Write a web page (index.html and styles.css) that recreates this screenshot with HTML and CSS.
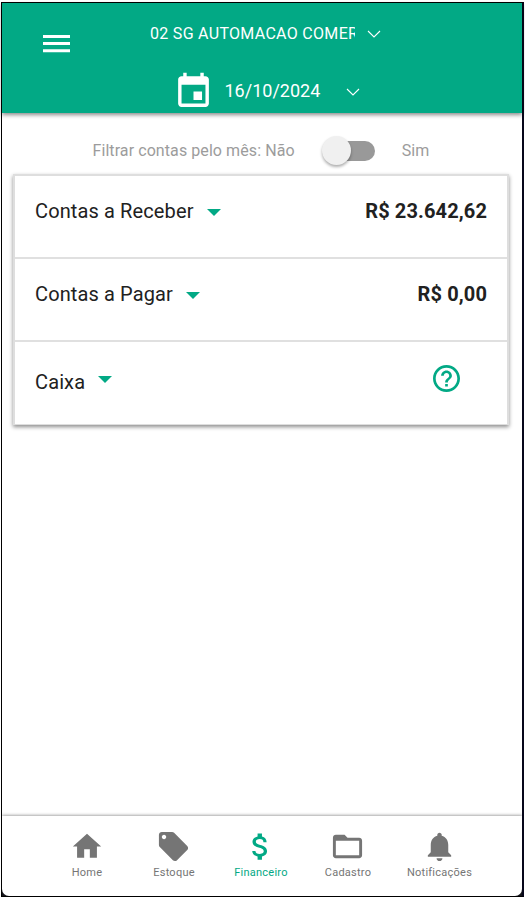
FILE: index.html
```html
<!DOCTYPE html>
<html lang="pt-BR">
<head>
<meta charset="utf-8">
<title>Financeiro</title>
<link rel="stylesheet" href="styles.css">
</head>
<body>
<div class="phone">
  <header class="header">
    <svg class="menu" viewBox="0 0 27 18"><path d="M0 0h27v3H0zM0 7.1h27v3H0zM0 14.2h27v3H0z"/></svg>
    <div class="pickers">
      <div class="company"><span class="company-name">02 SG AUTOMACAO COMER</span><svg class="chevron" viewBox="0 0 14 8"><path d="M1 1l6 6 6-6"/></svg></div>
      <div class="date"><svg class="calendar" viewBox="0 0 24 24"><path d="M17 12h-5v5h5v-5zM16 1v2H8V1H6v2H5c-1.11 0-1.99.9-1.99 2L3 19c0 1.1.89 2 2 2h14c1.1 0 2-.9 2-2V5c0-1.1-.9-2-2-2h-1V1h-2zm3 18H5V8h14v11z"/></svg><span class="date-text">16/10/2024</span><svg class="chevron" viewBox="0 0 14 8"><path d="M1 1l6 6 6-6"/></svg></div>
    </div>
  </header>
  <main class="content">
    <div class="filter"><span class="filter-label">Filtrar contas pelo mês: Não</span><span class="toggle"><span class="knob"></span></span><span class="filter-label">Sim</span></div>
    <section class="card">
      <div class="row"><span class="name">Contas a Receber</span><i class="caret"></i><b class="value">R$ 23.642,62</b></div>
      <div class="row"><span class="name">Contas a Pagar</span><i class="caret"></i><b class="value">R$ 0,00</b></div>
      <div class="row row-cash"><span class="name">Caixa</span><i class="caret"></i><svg class="help" viewBox="2 2 20 20"><path d="M11 18h2v-2h-2v2zm1-16C6.48 2 2 6.48 2 12s4.48 10 10 10 10-4.48 10-10S17.52 2 12 2zm0 18c-4.41 0-8-3.59-8-8s3.59-8 8-8 8 3.59 8 8-3.59 8-8 8zm0-14c-2.21 0-4 1.79-4 4h2c0-1.1.9-2 2-2s2 .9 2 2c0 2-3 1.75-3 5h2c0-2.25 3-2.5 3-5 0-2.21-1.79-4-4-4z"/></svg></div>
    </section>
  </main>
  <nav class="tabs">
    <a class="tab"><svg class="home-icon" viewBox="0 0 24 24"><path d="M10 20v-6h4v6h5v-8h3L12 3 2 12h3v8z"/></svg><span>Home</span></a>
    <a class="tab"><svg viewBox="0 0 24 24"><path d="M21.41 11.58l-9-9C12.05 2.22 11.55 2 11 2H4c-1.1 0-2 .9-2 2v7c0 .55.22 1.05.59 1.42l9 9c.36.36.86.58 1.41.58.55 0 1.05-.22 1.41-.59l7-7c.37-.36.59-.86.59-1.41 0-.55-.23-1.06-.59-1.42zM5.5 7C4.67 7 4 6.33 4 5.5S4.67 4 5.5 4 7 4.67 7 5.5 6.33 7 5.5 7z"/></svg><span>Estoque</span></a>
    <a class="tab active"><svg viewBox="0 0 24 24"><path d="M11.8 10.9c-2.27-.59-3-1.2-3-2.15 0-1.09 1.01-1.85 2.7-1.85 1.78 0 2.44.85 2.5 2.1h2.21c-.07-1.72-1.12-3.3-3.21-3.81V3h-3v2.16c-1.94.42-3.5 1.68-3.5 3.61 0 2.31 1.91 3.46 4.7 4.13 2.5.6 3 1.48 3 2.41 0 .69-.49 1.79-2.7 1.79-2.06 0-2.87-.92-2.98-2.1h-2.2c.12 2.19 1.76 3.42 3.68 3.83V21h3v-2.15c1.95-.37 3.5-1.5 3.5-3.55 0-2.84-2.43-3.81-4.7-4.4z"/></svg><span>Financeiro</span></a>
    <a class="tab"><svg viewBox="0 0 24 24"><path d="M20 6h-8l-2-2H4c-1.1 0-1.99.9-1.99 2L2 18c0 1.1.9 2 2 2h16c1.1 0 2-.9 2-2V8c0-1.1-.9-2-2-2zm0 12H4V8h16v10z"/></svg><span>Cadastro</span></a>
    <a class="tab tab-wide"><svg viewBox="0 0 24 24"><path d="M12 22c1.1 0 2-.9 2-2h-4c0 1.1.89 2 2 2zm6-6v-5c0-3.07-1.64-5.64-4.5-6.32V4c0-.83-.67-1.5-1.5-1.5s-1.5.67-1.5 1.5v.68C7.63 5.36 6 7.92 6 11v5l-2 2v1h16v-1l-2-2z"/></svg><span>Notificações</span></a>
  </nav>
</div>
</body>
</html>
```
FILE: styles.css
```css
* { box-sizing: border-box; }
body {
  margin: 0;
  padding: 2px 1px 1px;
  height: 898px;
  background: #fff;
  font-family: Roboto, sans-serif;
  overflow: hidden;
}
.phone {
  width: 523px;
  height: 895px;
  display: flex;
  flex-direction: column;
  border: 1px solid #000;
  border-right: 2px solid #06061a;
  background: linear-gradient(#fff, #fff 800px, #15151c 800px);
}
svg { display: block; flex: none; fill: currentColor; }
.header {
  height: 110px;
  flex: none;
  display: flex;
  background: #02a985;
  color: #fff;
  box-shadow: 0 2px 4px rgba(0, 0, 0, .45);
  z-index: 1;
}
.menu { width: 27px; height: 18px; margin: 32px 0 0 41px; }
.pickers { margin-left: 78px; }
.company { display: flex; align-items: center; height: 20px; margin-top: 20px; }
.company-name {
  width: 205px;
  margin-left: 2px;
  padding-top: 1px;
  overflow: hidden;
  white-space: nowrap;
  font-size: 16px;
  line-height: 20px;
  letter-spacing: .3px;
}
.chevron { width: 14px; height: 8px; fill: none; stroke: #fff; stroke-width: 1.1; }
.company .chevron { margin-left: 12px; margin-top: 1px; }
.date { display: flex; align-items: center; height: 42px; margin-top: 27px; margin-left: 24.5px; }
.calendar { width: 41px; height: 41px; }
.date-text { width: 98px; margin: 0 0 0 11px; font-size: 18px; line-height: 22px; }
.date .chevron { margin-left: 23.5px; margin-top: 1px; }
.content { flex: 1; background: #fff; }
.filter { display: flex; align-items: center; height: 61px; padding: 12px 0 0 90.5px; color: #9c9c9c; font-size: 16px; letter-spacing: .08px; }
.filter-label { white-space: nowrap; padding-top: 1px; }
.toggle { width: 46px; height: 20px; margin: 2px 27px 0 34px; border-radius: 10px; background: #999; }
.knob {
  display: block;
  width: 29px;
  height: 29px;
  margin: -5px 0 0 -7px;
  border-radius: 50%;
  background: #f0f0f0;
  box-shadow: 0 2px 3px rgba(0, 0, 0, .32);
}
.card {
  width: 496px;
  height: 251px;
  margin-left: 11px;
  border: 2px solid #dedede;
  border-bottom-width: 1px;
  background: #fff;
  box-shadow: 0 2px 4px rgba(0, 0, 0, .45);
}
.row { display: flex; align-items: flex-start; height: 83px; padding: 23px 20px 0; border-bottom: 2px solid #e0e0e0; color: #212121; font-size: 20px; line-height: 24px; letter-spacing: .12px; }
.row:last-child { border-bottom: 0; }
.caret { margin: 10px 0 0 13.5px; border: solid transparent; border-width: 7px 7px 0; border-top-color: #02a985; }
.value { margin-left: auto; }
.row-cash { padding-top: 28px; }
.row-cash .caret { margin: 6px 0 0 13px; }
.help { width: 27px; height: 27px; margin: -5px 27px 0 auto; color: #02a985; }
.tabs {
  height: 80px;
  flex: none;
  display: flex;
  padding-left: 41.5px;
  border-radius: 0 0 7px 7px;
  background: #fff;
  color: #757575;
  box-shadow: 0 -1px 3px rgba(0, 0, 0, .35);
  clip-path: inset(-6px 0 0 0);
}
.tab { display: flex; flex-direction: column; align-items: center; width: 87px; padding-top: 12px; font-size: 11px; line-height: 14px; letter-spacing: .25px; }
.tab-wide { width: 96px; }
.tab svg { width: 35px; height: 35px; margin: 1px 1px 2px 0; }
.tab .home-icon { width: 34px; }
.active { color: #02a985; }
```
